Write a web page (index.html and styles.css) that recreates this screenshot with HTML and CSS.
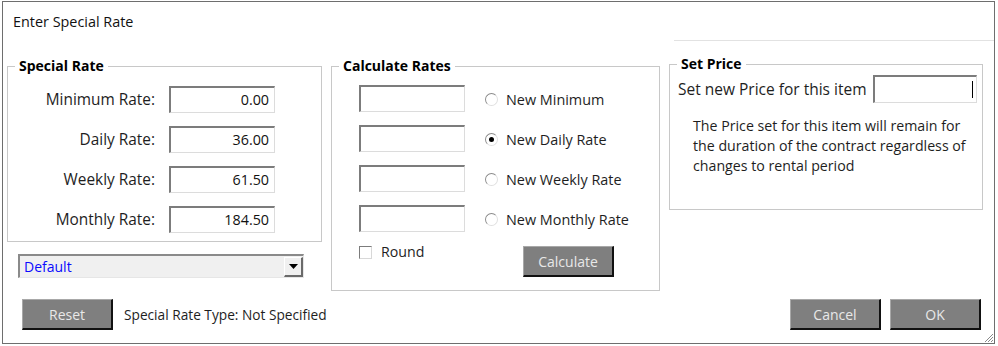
FILE: index.html
```html
<!DOCTYPE html>
<html>
<head>
    <link rel="stylesheet" href="styles.css">
</head>
<body>
    <div class="window">
        <div class="titlebar">
            <span class="title">Enter Special Rate</span>
            <div class="title-rule"></div>
        </div>

        <div class="content">
            <div class="groups">
                <div class="left-col">
                    <fieldset class="group rates">
                        <legend>Special Rate</legend>
                        <div class="rate-grid">
                            <label>Minimum Rate:</label>
                            <div class="field num">0.00</div>
                            <label>Daily Rate:</label>
                            <div class="field num">36.00</div>
                            <label>Weekly Rate:</label>
                            <div class="field num">61.50</div>
                            <label>Monthly Rate:</label>
                            <div class="field num">184.50</div>
                        </div>
                    </fieldset>
                    <div class="dropdown">
                        <span class="dropdown-text">Default</span>
                        <span class="dropdown-btn">
                            <svg width="9" height="5" viewBox="0 0 9 5"><path d="M0 0h9L4.5 5z" fill="#000"/></svg>
                        </span>
                    </div>
                </div>

                <fieldset class="group calc">
                    <legend>Calculate Rates</legend>
                    <div class="calc-rows">
                        <div class="calc-row">
                            <div class="field"></div>
                            <span class="radio"></span>
                            <span class="opt">New Minimum</span>
                        </div>
                        <div class="calc-row">
                            <div class="field"></div>
                            <span class="radio checked"></span>
                            <span class="opt">New Daily Rate</span>
                        </div>
                        <div class="calc-row">
                            <div class="field"></div>
                            <span class="radio"></span>
                            <span class="opt">New Weekly Rate</span>
                        </div>
                        <div class="calc-row">
                            <div class="field"></div>
                            <span class="radio"></span>
                            <span class="opt">New Monthly Rate</span>
                        </div>
                    </div>
                    <div class="calc-foot">
                        <div class="round">
                            <span class="checkbox"></span>
                            <span>Round</span>
                        </div>
                        <button class="btn calc-btn">Calculate</button>
                    </div>
                </fieldset>

                <fieldset class="group price">
                    <legend>Set Price</legend>
                    <div class="price-row">
                        <span>Set new Price for this item</span>
                        <div class="field price-field"><span class="caret"></span></div>
                    </div>
                    <p class="note">The Price set for this item will remain for<br>the duration of the contract regardless of<br>changes to rental period</p>
                </fieldset>
            </div>

            <div class="footer">
                <button class="btn">Reset</button>
                <span class="status">Special Rate Type: Not Specified</span>
                <div class="spacer"></div>
                <button class="btn">Cancel</button>
                <button class="btn">OK</button>
            </div>
        </div>

        <svg class="grip" width="10" height="10" viewBox="0 0 10 10">
            <path d="M9 1L1 9M9 4L4 9M9 7L7 9" stroke="#8a8a8a" stroke-width="1"/>
        </svg>
    </div>
</body>
</html>
```

FILE: styles.css
```css
body {
    margin: 0;
    background: #fff;
    font-family: 'Open Sans', 'Noto Sans', sans-serif;
    font-size: 13.7px;
    color: #1e1e1e;
}

.window {
    position: relative;
    box-sizing: border-box;
    width: 993px;
    height: 343px;
    margin: 1px 0 0 2px;
    border: 1px solid #6e6e6e;
    overflow: hidden;
}

.titlebar {
    display: flex;
    align-items: flex-end;
    height: 39px;
}

.title {
    align-self: center;
    margin-left: 10px;
    margin-top: -1px;
    font-size: 14.4px;
    color: #111;
}

.title-rule {
    margin-left: auto;
    width: 320px;
    border-bottom: 1px solid #e2e2e2;
}

.content {
    padding: 17px 0 0 4px;
}

.groups {
    display: flex;
    align-items: flex-start;
    gap: 9px;
    height: 233px;
}

.group {
    box-sizing: border-box;
    margin: 0;
    padding: 0;
    border: 1px solid #c8c8c8;
    box-shadow: inset 1px 1px 0 #fff;
}

.group legend {
    margin-left: 7px;
    padding: 0 4px;
    font-weight: bold;
    font-size: 14px;
    line-height: 16px;
    color: #000;
}

.field {
    box-sizing: border-box;
    width: 106px;
    height: 27px;
    border-style: solid;
    border-width: 2px 1px 1px 2px;
    border-color: #7c7c7c #dcdcdc #dcdcdc #7c7c7c;
    background: #fff;
}

.num {
    text-align: right;
    padding-right: 5px;
    line-height: 23px;
    font-size: 14.3px;
    color: #111;
}

/* special rate */
.rates {
    width: 315px;
    height: 184px;
}

.rate-grid {
    display: grid;
    grid-template-columns: 147px 106px;
    column-gap: 14px;
    row-gap: 13px;
    align-items: center;
    padding-top: 12px;
}

.rate-grid label {
    text-align: right;
    font-size: 15.4px;
}

.dropdown {
    display: flex;
    align-items: center;
    box-sizing: border-box;
    width: 286px;
    height: 24px;
    margin: 12px 0 0 11px;
    border-style: solid;
    border-width: 2px 1px 1px 2px;
    border-color: #8a8a8a #e6e6e6 #e6e6e6 #8a8a8a;
    background: #f0f0f0;
}

.dropdown-text {
    flex: 1;
    padding-left: 4px;
    color: #0a0aff;
    font-size: 14px;
}

.dropdown-btn {
    display: flex;
    align-items: center;
    justify-content: center;
    box-sizing: border-box;
    width: 19px;
    height: 20px;
    border-style: solid;
    border-width: 1px 2px 2px 1px;
    border-color: #fff #6a6a6a #6a6a6a #fff;
    background: #f0f0f0;
}

/* calculate rates */
.calc {
    width: 329px;
    height: 233px;
}

.calc-rows {
    display: flex;
    flex-direction: column;
    gap: 13px;
    padding: 11px 0 0 27px;
}

.calc-row {
    display: flex;
    align-items: center;
}

.opt {
    font-size: 14.4px;
    padding-top: 2px;
}

.radio {
    box-sizing: border-box;
    width: 13px;
    height: 13px;
    margin: 2px 8px 0 20px;
    border-radius: 50%;
    border: 1px solid;
    border-color: #8c8c8c #e0e0e0 #e0e0e0 #8c8c8c;
    background: #fff;
    position: relative;
}

.radio.checked::after {
    content: '';
    position: absolute;
    left: 3px;
    top: 3px;
    width: 5px;
    height: 5px;
    border-radius: 50%;
    background: #000;
}

.calc-foot {
    display: flex;
    justify-content: space-between;
    align-items: flex-start;
    width: 255px;
    margin: 12px 0 0 27px;
}

.round {
    display: flex;
    align-items: center;
    gap: 9px;
    line-height: 16px;
    font-size: 14.2px;
}

.checkbox {
    box-sizing: border-box;
    width: 13px;
    height: 13px;
    border: 1px solid;
    border-color: #7c7c7c #d8d8d8 #d8d8d8 #7c7c7c;
    background: #fff;
}

.calc-btn {
    margin-top: 2px;
}

/* set price */
.price {
    width: 314px;
    height: 154px;
    margin-top: -2px;
}

.price-row {
    display: flex;
    align-items: center;
    justify-content: space-between;
    padding: 3px 5px 0 8px;
    font-size: 15.5px;
}

.price-field {
    width: 104px;
    height: 28px;
    display: flex;
    justify-content: flex-end;
    align-items: center;
    padding-right: 3px;
}

.caret {
    width: 1px;
    height: 17px;
    background: #000;
}

.note {
    margin: 13px 0 0 23px;
    line-height: 20px;
    font-size: 14.2px;
}

/* footer */
.footer {
    display: flex;
    align-items: center;
    gap: 11px;
    margin-top: 8px;
    padding: 0 13px 0 15px;
}

.spacer {
    flex: 1;
}

.btn {
    box-sizing: border-box;
    width: 91px;
    height: 31px;
    border-style: solid;
    border-width: 1px 2px 2px 1px;
    border-color: #a8a8a8 #111 #111 #a8a8a8;
    background: #7f7f7f;
    color: #e8e8e8;
    font-family: inherit;
    font-size: 14px;
    padding: 0;
}

.footer .btn + .btn {
    margin-left: -2px;
}

.grip {
    position: absolute;
    right: 0;
    bottom: 0;
}
```
